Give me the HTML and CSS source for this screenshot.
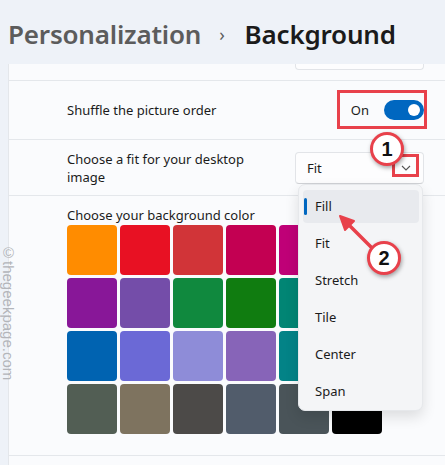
FILE: index.html
```html
<!DOCTYPE html>
<html lang="en">
<head>
    <meta charset="UTF-8">
    <meta name="viewport" content="width=device-width, initial-scale=1.0">
    <title>Background</title>
    <link rel="stylesheet" href="styles.css">
</head>
<body>
    <h1 class="title"><span class="crumb">Personalization</span><span class="sep">›</span><span>Background</span></h1>

    <div class="card">
        <div class="row row-top">
            <div class="select-stub"></div>
        </div>
        <div class="row row-shuffle">
            <span class="label">Shuffle the picture order</span>
            <div class="switch">
                <span>On</span>
                <span class="toggle"><span class="knob"></span></span>
            </div>
        </div>
        <div class="row row-fit">
            <span class="label">Choose a fit for your desktop<br>image</span>
            <div class="select">
                <span>Fit</span>
                <svg class="chevron" width="10" height="6" viewBox="0 0 10 6"><path d="M1 1l4 4 4-4" fill="none" stroke="#555" stroke-width="1.1"/></svg>
            </div>
        </div>
        <div class="colors">
            <div class="colors-label">Choose your background color</div>
            <div class="swatches">
                <span class="swatch" style="background:#ff8c00"></span>
                <span class="swatch" style="background:#e81123"></span>
                <span class="swatch" style="background:#d13438"></span>
                <span class="swatch" style="background:#c30052"></span>
                <span class="swatch" style="background:#bf0077"></span>
                <span class="swatch" style="background:#9a0089"></span>
                <span class="swatch" style="background:#881798"></span>
                <span class="swatch" style="background:#744da9"></span>
                <span class="swatch" style="background:#10893e"></span>
                <span class="swatch" style="background:#107c10"></span>
                <span class="swatch" style="background:#018574"></span>
                <span class="swatch" style="background:#2d7d9a"></span>
                <span class="swatch" style="background:#0063b1"></span>
                <span class="swatch" style="background:#6b69d6"></span>
                <span class="swatch" style="background:#8e8cd8"></span>
                <span class="swatch" style="background:#8764b8"></span>
                <span class="swatch" style="background:#038387"></span>
                <span class="swatch" style="background:#486860"></span>
                <span class="swatch" style="background:#525e54"></span>
                <span class="swatch" style="background:#7e735f"></span>
                <span class="swatch" style="background:#4c4a48"></span>
                <span class="swatch" style="background:#515c6b"></span>
                <span class="swatch" style="background:#4a5459"></span>
                <span class="swatch" style="background:#000000"></span>
            </div>
        </div>
        <div class="row-next"></div>
    </div>

    <ul class="menu">
        <li class="selected">Fill</li>
        <li>Fit</li>
        <li>Stretch</li>
        <li>Tile</li>
        <li>Center</li>
        <li>Span</li>
    </ul>

    <!-- annotations -->
    <div class="mark mark-switch"></div>
    <div class="mark mark-chevron"></div>
    <div class="badge badge-1">1</div>
    <svg class="arrow" width="445" height="465" viewBox="0 0 445 465">
        <line x1="372" y1="248" x2="348" y2="224" stroke="#e8414b" stroke-width="3.5" stroke-linecap="round"/>
        <path d="M340 216 L354 221 L345 230 Z" fill="#e8414b" stroke="#e8414b" stroke-width="2" stroke-linejoin="round"/>
    </svg>
    <div class="badge badge-2">2</div>

    <div class="watermark">©thegeekpage.com</div>
</body>
</html>
```

FILE: styles.css
```css
body {
    margin: 0;
    width: 445px;
    height: 465px;
    overflow: hidden;
    background: #eef2f8;
    font-family: "Noto Sans", "Open Sans", sans-serif;
    color: #1b1b1b;
    position: relative;
}
.title {
    margin: 0;
    padding: 15px 0 0 8px;
    height: 52px;
    box-sizing: border-box;
    font-size: 26px;
    font-weight: 600;
    letter-spacing: -0.2px;
    line-height: 36px;
    display: flex;
    align-items: center;
    white-space: nowrap;
}
.title .crumb {
    color: #5c5c5c;
}
.title .sep {
    color: #5c5c5c;
    font-size: 18px;
    font-weight: 400;
    margin: 0 20px 0 18px;
}
.card {
    margin: 12px 0 0 8px;
    background: #fafbfd;
    border-left: 1px solid #e4e7eb;
    font-size: 13px;
}
.row {
    display: flex;
    align-items: center;
    justify-content: space-between;
    padding: 0 21px 0 58px;
    border-bottom: 1px solid #e4e7eb;
}
.row-top {
    height: 16px;
    align-items: flex-start;
}
.select-stub {
    margin-left: auto;
    width: 129px;
    height: 6px;
    box-sizing: border-box;
    background: #fdfdfe;
    border: 1px solid #e2e4e8;
    border-top: none;
    border-radius: 0 0 4px 4px;
}
.row-shuffle {
    height: 58px;
}
.row-fit {
    height: 55px;
}
.label {
    line-height: 18px;
}
.switch {
    display: flex;
    align-items: center;
    gap: 15px;
}
.toggle {
    width: 40px;
    height: 20px;
    border-radius: 10px;
    background: #0067c0;
    display: flex;
    align-items: center;
    justify-content: flex-end;
}
.knob {
    width: 12px;
    height: 12px;
    border-radius: 50%;
    background: #fff;
    margin-right: 4px;
}
.select {
    width: 129px;
    height: 32px;
    box-sizing: border-box;
    background: #fdfdfe;
    border: 1px solid #e2e4e8;
    border-bottom-color: #d0d2d6;
    border-radius: 4px;
    display: flex;
    align-items: center;
    justify-content: space-between;
    padding: 0 12px 0 11px;
}
.colors {
    padding: 10px 0 21px 58px;
    border-bottom: 1px solid #e4e7eb;
}
.colors-label {
    line-height: 19px;
}
.swatches {
    display: grid;
    grid-template-columns: repeat(6, 50px);
    grid-auto-rows: 50px;
    gap: 3px;
}
.swatch {
    border-radius: 4px;
}
.row-next {
    height: 20px;
}
.menu {
    position: absolute;
    left: 298px;
    top: 184px;
    width: 125px;
    height: 227px;
    box-sizing: border-box;
    margin: 0;
    padding: 5px 3px 0 4px;
    list-style: none;
    background: #f4f5f7;
    border: 1px solid #e6e8eb;
    border-radius: 7px;
    box-shadow: 0 6px 14px rgba(0, 0, 0, 0.12);
    display: flex;
    flex-direction: column;
    gap: 4px;
    font-size: 13px;
}
.menu li {
    height: 33px;
    line-height: 33px;
    padding-left: 12px;
    border-radius: 4px;
    position: relative;
}
.menu li.selected {
    background: #e8eaee;
}
.menu li.selected::before {
    content: "";
    position: absolute;
    left: 1px;
    top: 8px;
    width: 3px;
    height: 17px;
    border-radius: 2px;
    background: #0067c0;
}
.mark {
    position: absolute;
    border: 3px solid #e8414b;
    box-sizing: border-box;
}
.mark-switch {
    left: 337px;
    top: 90px;
    width: 90px;
    height: 39px;
}
.mark-chevron {
    left: 392px;
    top: 154px;
    width: 27px;
    height: 23px;
}
.badge {
    position: absolute;
    width: 34px;
    height: 34px;
    box-sizing: border-box;
    border: 3px solid #e8414b;
    border-radius: 50%;
    background: #fff;
    box-shadow: 1px 2px 4px rgba(0, 0, 0, 0.35);
    font-family: "Liberation Sans", Arial, sans-serif;
    font-weight: 700;
    font-size: 20px;
    line-height: 28px;
    text-align: center;
    color: #111;
}
.badge-1 {
    left: 370px;
    top: 132px;
}
.badge-2 {
    left: 367px;
    top: 241px;
}
.arrow {
    position: absolute;
    left: 0;
    top: 0;
    pointer-events: none;
}
.watermark {
    position: absolute;
    left: 0;
    top: 244px;
    writing-mode: vertical-rl;
    font-family: "Liberation Sans", Arial, sans-serif;
    font-size: 15px;
    color: #b3b5ba;
}
```
